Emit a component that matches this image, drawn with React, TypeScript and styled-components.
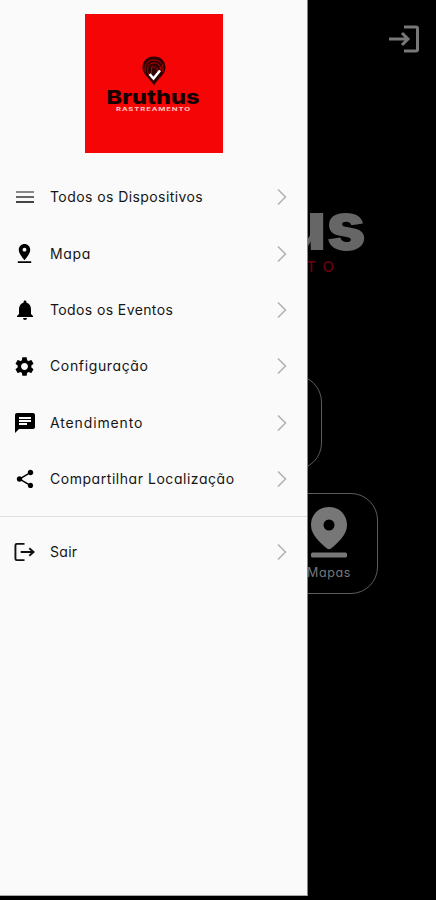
import React from 'react';
import styled, { createGlobalStyle } from 'styled-components';
import { MdPinDrop, MdNotifications, MdSettings, MdChat, MdShare } from 'react-icons/md';

const GlobalStyle = createGlobalStyle`
  * { box-sizing: border-box; }
  body { margin: 0; background: #000; font-family: Inter, "Noto Sans", sans-serif; }
`;

const Screen = styled.div`
  position: relative;
  width: 436px;
  height: 900px;
  overflow: hidden;
  background: #000;
`;

const Home = styled.main`
  display: flex;
  flex-direction: column;
  height: 100%;
  color: #777;
`;

const TopBar = styled.header`
  display: flex;
  justify-content: flex-end;
  height: 196px;
  padding: 24px 16px 0 0;
`;

const Brand = styled.div`
  display: flex;
  flex-direction: column;
  align-items: flex-end;
  width: 366px;
  height: 179px;
`;

const BrandName = styled.div`
  font-size: 67px;
  line-height: 60px;
  font-weight: 900;
  color: #666;
`;

const BrandTag = styled.div`
  font-size: 15px;
  line-height: 20px;
  margin-top: 1px;
  padding-right: 25px;
  font-weight: 500;
  letter-spacing: 7px;
  color: #6d0010;
`;

const Card = styled.section<{ $width: number; $height: number; $left: number }>`
  display: flex;
  flex-direction: column;
  align-items: center;
  flex: none;
  width: ${(p) => p.$width}px;
  height: ${(p) => p.$height}px;
  margin-left: ${(p) => p.$left}px;
  margin-bottom: 23px;
  padding-top: 13px;
  border: 1px solid #5c5c5c;
  border-radius: 27px;
`;

const CardLabel = styled.span`
  font-size: 12.5px;
  line-height: 18px;
  margin-top: 6px;
  letter-spacing: 0.6px;
  font-feature-settings: "cv11";
`;

const Drawer = styled.aside`
  position: absolute;
  inset: 0 auto 4px 0;
  width: 308px;
  background: #fafafa;
  border-right: 1px solid #858585;
  border-bottom: 1px solid #aaa;
`;

const LogoArea = styled.div`
  display: flex;
  justify-content: center;
  height: 169px;
  padding: 14px 0 0 1px;
`;

const Menu = styled.nav<{ $divided?: boolean }>`
  display: flex;
  flex-direction: column;
  padding-top: ${(p) => (p.$divided ? 7 : 0)}px;
  border-top: ${(p) => (p.$divided ? '1px solid #dedede' : 'none')};
`;

const MenuGroup = styled.div`
  height: 347px;
`;

const Row = styled.a`
  display: grid;
  grid-template-columns: 50px 1fr 12px;
  align-items: center;
  height: 56.4px;
  padding-right: 19px;
  color: #151515;
`;

const IconSlot = styled.span`
  display: flex;
  justify-content: center;
  padding-right: 1px;
  color: #000;
`;

const Label = styled.span<{ $spacing: number }>`
  font-size: 14px;
  line-height: 20px;
  white-space: nowrap;
  letter-spacing: ${(p) => p.$spacing}px;
  font-feature-settings: "cv11";
`;

const Lines = () => (
  <svg width="18" height="14" viewBox="0 0 18 14" fill="none" strokeWidth="2">
    <path d="M0 2h18" stroke="#888" />
    <path d="M0 7h18" stroke="#666" />
    <path d="M0 12h18" stroke="#444" />
  </svg>
);

const Exit = () => (
  <svg width="21" height="20" viewBox="0 0 22 20" fill="none" stroke="#111" strokeWidth="2">
    <path d="M11 1.5H3Q1.5 1.5 1.5 3v14q0 1.500 1.500 1.500h8M7 10h13M16 6l4.500 4-4.500 4" />
  </svg>
);

const Enter = () => (
  <svg width="31" height="30" viewBox="0 0 31 30" fill="none" stroke="#777" strokeWidth="3">
    <path d="M15 3h12q1.500 0 1.500 1.500v21q0 1.500-1.500 1.500H15M0 15h18M13 9l6 6-6 6" />
  </svg>
);

const Chevron = () => (
  <svg width="12" height="18" viewBox="0 0 12 18" fill="none" stroke="#b3b3b3" strokeWidth="1.6">
    <path d="M2 1.500 9.500 9 2 16.500" />
  </svg>
);

const BigPin = () => (
  <svg width="38" height="51" viewBox="0 0 38 51">
    <path fill="#777" fillRule="evenodd" d="M19 0C8.500 0 1 7.800 1 18c0 10 9 17.500 16 23.500q2 1.500 4 0C28 35.500 37 28 37 18 37 7.800 29.500 0 19 0Zm0 12.500a5.500 5.500 0 1 1 0 11 5.500 5.500 0 0 1 0-11Z" />
    <rect x="1" y="45.500" width="36" height="5" rx="1.500" fill="#777" />
  </svg>
);

const Logo = () => (
  <svg width="138" height="139" viewBox="0 0 138 139">
    <rect width="138" height="139" fill="#f50505" />
    <path d="M69 42.500c-7 0-11.500 4.500-11.500 11 0 7 7 10.500 11.500 18C73.500 64 80.500 60.500 80.500 53.500c0-6.500-4.500-11-11.500-11Z" fill="#310000" />
    <path d="M60.500 59c-2-8 2-13 8.500-13s10.500 5 8.500 12M63.500 60c-2.500-7 0-11 5.500-11s7.500 4 6 8M66.500 61v-8h3q4 1 2.500 5" fill="none" stroke="#b50000" strokeWidth="1" />
    <path d="m64.500 60 4 4.500 6.500-8" fill="none" stroke="#fff" strokeWidth="2.500" />
    <text x="21.500" y="89.500" fontFamily="Inter" fontSize="19" fontWeight="800" textLength="93" lengthAdjust="spacingAndGlyphs" fill="#160000">Bruthus</text>
    <text x="31" y="97" fontFamily="Inter" fontSize="5" fontWeight="700" letterSpacing="0.6" textLength="75" lengthAdjust="spacingAndGlyphs" fill="#ffc4bd">RASTREAMENTO</text>
  </svg>
);

const items = [
  { label: 'Todos os Dispositivos', icon: <Lines />, spacing: 0.42 },
  { label: 'Mapa', icon: <MdPinDrop size={23} />, spacing: 0.65 },
  { label: 'Todos os Eventos', icon: <MdNotifications size={24} />, spacing: 0.39 },
  { label: 'Configuração', icon: <MdSettings size={23} />, spacing: 0.64 },
  { label: 'Atendimento', icon: <MdChat size={24} />, spacing: 0.86 },
  { label: 'Compartilhar Localização', icon: <MdShare size={22} />, spacing: 0.54 },
];

const MenuRow = ({ label, icon, spacing }: { label: string; icon: React.ReactNode; spacing: number }) => (
  <Row>
    <IconSlot>{icon}</IconSlot>
    <Label $spacing={spacing}>{label}</Label>
    <Chevron />
  </Row>
);

export default function App() {
  return (
    <Screen>
      <GlobalStyle />
      <Home>
        <TopBar><Enter /></TopBar>
        <Brand>
          <BrandName>us</BrandName>
          <BrandTag>TO</BrandTag>
        </Brand>
        <Card $width={208} $height={95} $left={114} />
        <Card $width={98} $height={101} $left={280}>
          <BigPin />
          <CardLabel>Mapas</CardLabel>
        </Card>
      </Home>
      <Drawer>
        <LogoArea><Logo /></LogoArea>
        <MenuGroup>
          <Menu>{items.map((item) => <MenuRow key={item.label} {...item} />)}</Menu>
        </MenuGroup>
        <Menu $divided>
          <MenuRow label="Sair" icon={<Exit />} spacing={0.3} />
        </Menu>
      </Drawer>
    </Screen>
  );
}
